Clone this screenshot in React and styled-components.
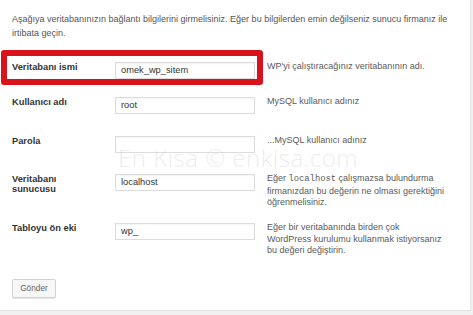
import React from "react";
import styled, { createGlobalStyle } from "styled-components";

const Global = createGlobalStyle`
  html, body { margin: 0; padding: 0; background: #f1f1f1; }
  body { font-family: "Liberation Sans", Arial, sans-serif; }
`;

const Panel = styled.div`
  position: relative;
  box-sizing: border-box;
  width: 471px;
  height: 311px;
  background: #fff;
  border-right: 1px solid #e8e8e8;
  border-bottom: 1px solid #e4e4e4;
  box-shadow: 0 1px 2px rgba(0, 0, 0, 0.05);
  padding: 12px 0 0 12px;
  overflow: hidden;
`;

const Intro = styled.p`
  margin: 0;
  width: 445px;
  font-size: 9px;
  line-height: 14px;
  color: #555;
`;

const Form = styled.div`
  display: flex;
  flex-direction: column;
  margin: 22px 0 0 -12px;
`;

const Row = styled.div`
  position: relative;
  display: grid;
  grid-template-columns: 103px 152px 1fr;
  align-items: start;
  height: ${(p) => p.$h}px;
  padding-left: 12px;

  ${(p) =>
    p.$highlight &&
    `
    &::before {
      content: "";
      position: absolute;
      left: 1px;
      top: -12px;
      width: 262px;
      height: 35px;
      box-sizing: border-box;
      border: 6px solid #d9131c;
      border-radius: 3px;
      pointer-events: none;
    }
  `}
`;

const Label = styled.label`
  font-size: 9.3px;
  font-weight: bold;
  line-height: 10px;
  color: #333;
`;

const Input = styled.div`
  box-sizing: border-box;
  width: 140px;
  height: 17px;
  border: 1px solid #dcdcdc;
  box-shadow: inset 0 1px 2px rgba(0, 0, 0, 0.05);
  background: #fff;
  padding: 0 5px;
  font-size: 9.3px;
  line-height: 15px;
  color: #333;
`;

const Desc = styled.div`
  font-size: 9px;
  line-height: 11.5px;
  color: #5a5a5a;
  margin-top: -1px;
  width: 182px;
`;

const Code = styled.code`
  font-family: "Liberation Mono", "Courier New", monospace;
  font-size: 8.8px;
`;

const Button = styled.button`
  box-sizing: border-box;
  width: 44px;
  height: 19px;
  padding: 0;
  margin-left: 12px;
  background: #f7f7f7;
  border: 1px solid #d2d2d2;
  border-radius: 2px;
  box-shadow: 0 1px 0 #e6e6e6;
  font-family: "Liberation Sans", Arial, sans-serif;
  font-size: 8.3px;
  color: #666;
`;

const Watermark = styled.div`
  position: absolute;
  left: 118px;
  top: 146px;
  font-family: "Open Sans", sans-serif;
  font-weight: 300;
  font-size: 24px;
  letter-spacing: 0.5px;
  line-height: 24px;
  color: rgba(200, 200, 200, 0.35);
  white-space: nowrap;
  pointer-events: none;
`;

const rows = [
  { label: "Veritabanı ismi", value: "omek_wp_sitem", desc: "WP'yi çalıştıracağınız veritabanının adı.", h: 35, highlight: true },
  { label: "Kullanıcı adı", value: "root", desc: "MySQL kullanıcı adınız", h: 39 },
  { label: "Parola", value: "", desc: "...MySQL kullanıcı adınız", h: 38 },
  {
    label: (
      <>
        Veritabanı
        <br />
        sunucusu
      </>
    ),
    value: "localhost",
    desc: (
      <>
        Eğer <Code>localhost</Code> çalışmazsa bulundurma firmanızdan bu değerin ne olması gerektiğini öğrenmelisiniz.
      </>
    ),
    h: 49,
  },
  {
    label: "Tabloyu ön eki",
    value: "wp_",
    desc: (
      <>
        Eğer bir veritabanında birden çok
        <br />
        WordPress kurulumu kullanmak istiyorsanız bu değeri değiştirin.
      </>
    ),
    h: 54,
  },
];

export default function App() {
  return (
    <>
      <Global />
      <Panel>
        <Intro>
          Aşağıya veritabanınızın bağlantı bilgilerini girmelisiniz. Eğer bu bilgilerden emin değilseniz sunucu firmanız ile irtibata geçin.
        </Intro>
        <Form>
          {rows.map((r, i) => (
            <Row key={i} $h={r.h} $highlight={r.highlight}>
              <Label>{r.label}</Label>
              <Input>{r.value}</Input>
              <Desc>{r.desc}</Desc>
            </Row>
          ))}
          <div>
            <Button>Gönder</Button>
          </div>
        </Form>
        <Watermark>En Kısa © enkisa.com</Watermark>
      </Panel>
    </>
  );
}
